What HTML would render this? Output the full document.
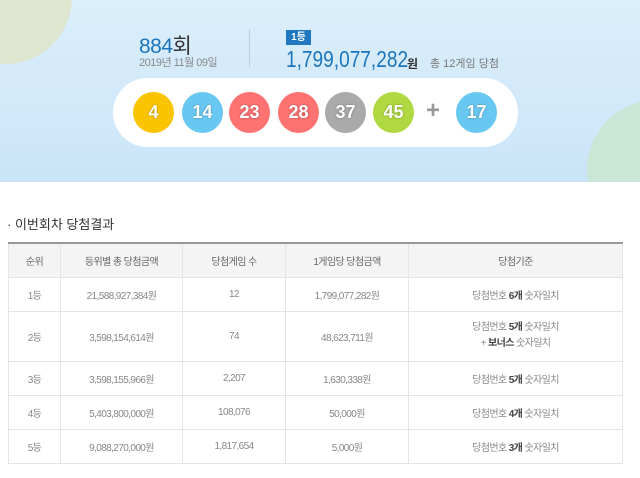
<!DOCTYPE html>
<html><head><meta charset="utf-8"><style>
*{margin:0;padding:0;box-sizing:border-box}
body{width:640px;height:478px;overflow:hidden;background:#fff;font-family:"Liberation Sans","Noto Sans CJK KR",sans-serif;position:relative}
.banner{position:absolute;left:0;top:0;width:640px;height:182px;background:linear-gradient(#dbeefb,#d2e9fa 60%,#c9e4f8);overflow:hidden}
.blob1{position:absolute;left:-60px;top:-70px;width:132px;height:134px;border-radius:50%;background:#dfe6d0}
.blob2{position:absolute;left:587px;top:100px;width:140px;height:140px;border-radius:50%;background:#c9e6d6}
.abs{position:absolute;white-space:nowrap}
.pill{position:absolute;left:113px;top:78px;width:405px;height:69px;border-radius:35px;background:#fff}
.ball{position:absolute;top:92px;width:41px;height:41px;border-radius:50%;color:#fff;font-weight:bold;font-size:18px;line-height:41px;text-align:center;text-shadow:0 0 2px rgba(0,0,0,.35)}
table{position:absolute;left:8px;top:242px;width:615px;border-collapse:collapse;font-size:10px;color:#888;letter-spacing:-0.6px}
th,td{border:1px solid #e5e5e5;text-align:center;font-weight:normal;vertical-align:middle}
table{border-top:2px solid #999}
th{background:#f4f4f4;height:34px;color:#666}
td{height:34px}
td b{color:#444}
</style></head><body>
<div class="banner"><div class="blob1"></div><div class="blob2"></div></div>
<div class="abs" style="left:139px;top:30px;font-size:21px;color:#1b75bc;letter-spacing:-0.5px">884<span style="color:#333">회</span></div>
<div class="abs" style="left:139px;top:54px;font-size:11px;color:#888;letter-spacing:-0.5px">2019년 11월 09일</div>
<div class="abs" style="left:249px;top:29px;width:1px;height:38px;background:#b8cfe0"></div>
<div class="abs" style="left:286px;top:30px;width:25px;height:15px;background:#1f78c0;color:#fff;font-size:10px;font-weight:bold;text-align:center;line-height:15px">1등</div>
<div class="abs" style="left:286px;top:46px;font-size:23px;color:#1b75bc;transform:scaleX(0.83);transform-origin:left top">1,799,077,282</div>
<div class="abs" style="left:407px;top:55px;font-size:12px;color:#333;font-weight:bold">원</div>
<div class="abs" style="left:430px;top:55px;font-size:11px;color:#777">총 12게임 당첨</div>
<div class="pill"></div>
<div class="ball" style="left:133px;background:#fbc400">4</div>
<div class="ball" style="left:182px;background:#69c8f2">14</div>
<div class="ball" style="left:229px;background:#ff7272">23</div>
<div class="ball" style="left:278px;background:#ff7272">28</div>
<div class="ball" style="left:325px;background:#aaa">37</div>
<div class="ball" style="left:373px;background:#b0d840">45</div>
<div class="abs" style="left:426px;top:97px;font-size:24px;color:#999;font-weight:bold">+</div>
<div class="ball" style="left:456px;background:#69c8f2">17</div>
<div class="abs" style="left:7px;top:214px;font-size:13px;color:#333">· 이번회차 당첨결과</div>
<table>
<tr><th style="width:52px">순위</th><th style="width:122px">등위별 총 당첨금액</th><th style="width:103px">당첨게임 수</th><th style="width:123px">1게임당 당첨금액</th><th>당첨기준</th></tr>
<tr><td>1등</td><td>21,588,927,384원</td><td>12</td><td>1,799,077,282원</td><td>당첨번호 <b>6개</b> 숫자일치</td></tr>
<tr><td style="height:50px">2등</td><td>3,598,154,614원</td><td>74</td><td>48,623,711원</td><td style="line-height:16px">당첨번호 <b>5개</b> 숫자일치<br>+ <b>보너스</b> 숫자일치</td></tr>
<tr><td>3등</td><td>3,598,155,966원</td><td>2,207</td><td>1,630,338원</td><td>당첨번호 <b>5개</b> 숫자일치</td></tr>
<tr><td>4등</td><td>5,403,800,000원</td><td>108,076</td><td>50,000원</td><td>당첨번호 <b>4개</b> 숫자일치</td></tr>
<tr><td>5등</td><td>9,088,270,000원</td><td>1,817,654</td><td>5,000원</td><td>당첨번호 <b>3개</b> 숫자일치</td></tr>
</table>
</body></html>
